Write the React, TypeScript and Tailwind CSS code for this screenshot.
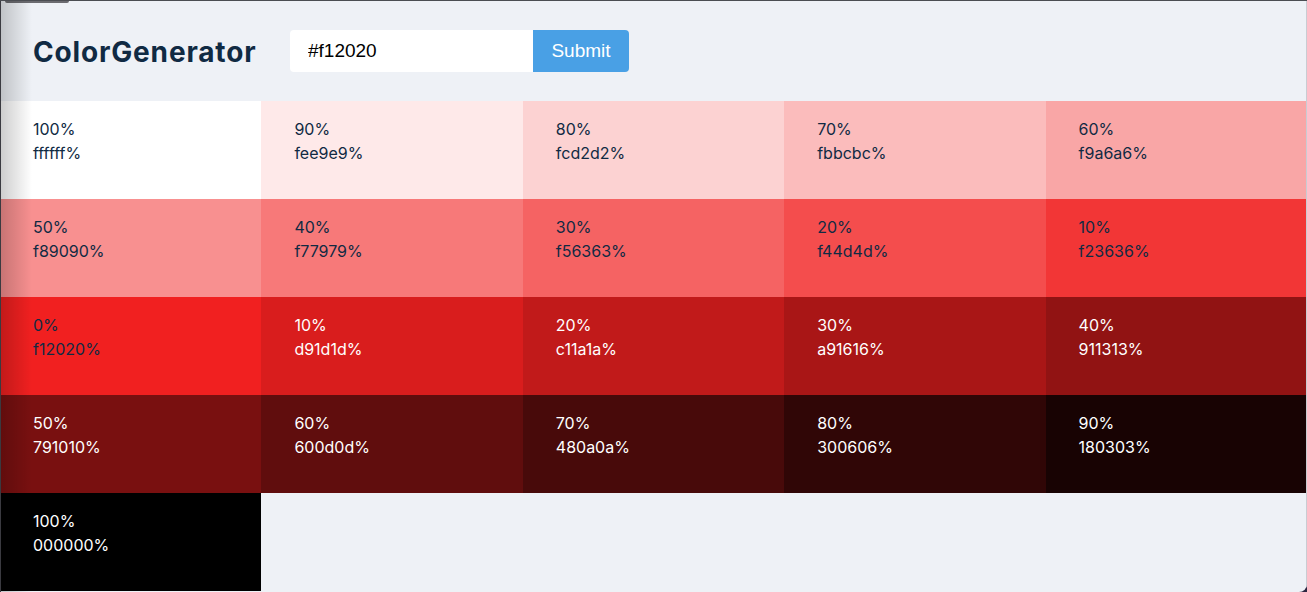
import React from "react";

type Swatch = { weight: number; hex: string; dark: boolean };

const tints = ["ffffff", "fee9e9", "fcd2d2", "fbbcbc", "f9a6a6", "f89090", "f77979", "f56363", "f44d4d", "f23636"];
const shades = ["d91d1d", "c11a1a", "a91616", "911313", "791010", "600d0d", "480a0a", "300606", "180303", "000000"];

const swatches: Swatch[] = [
  ...tints.map((hex, i) => ({ weight: 100 - i * 10, hex, dark: false })),
  { weight: 0, hex: "f12020", dark: false },
  ...shades.map((hex, i) => ({ weight: (i + 1) * 10, hex, dark: true })),
];

function SingleColor({ weight, hex, dark }: Swatch) {
  return (
    <div
      className={`h-[98px] pl-[33px] pr-8 pt-4 text-[16px] leading-6 ${dark ? "text-white" : "text-[#102a43]"}`}
      style={{ backgroundColor: `#${hex}` }}
    >
      <p>{weight}%</p>
      <p>{hex}%</p>
    </div>
  );
}

export default function App() {
  return (
    <div className="w-full h-[592px] bg-[#2b2540]">
      <div
        className="relative w-full h-full overflow-hidden bg-[#eef1f6] border-t border-[#4b4d52] rounded-br-lg"
        style={{ fontFamily: "Inter, 'Noto Sans', sans-serif" }}
      >
        <div className="absolute left-[5px] top-0 w-[64px] h-[2px] bg-[#6b6b70] rounded-b" />
        <section className="h-[100px] flex items-center pl-[33px]">
          <h3 className="text-[28px] font-bold tracking-[0.03em] text-[#102a43] w-[224px] mt-[1px] whitespace-nowrap">ColorGenerator</h3>
          <form className="flex ml-[33px]">
            <input
              defaultValue="#f12020"
              className="w-[243px] h-[42px] bg-white rounded-l pl-[18px] text-[19px] text-black outline-none"
              style={{ fontFamily: "'Liberation Sans', Arial, sans-serif" }}
            />
            <button
              className="w-[96px] h-[42px] bg-[#49a0e5] text-white text-[19px] rounded-r"
              style={{ fontFamily: "'Liberation Sans', Arial, sans-serif" }}
            >
              Submit
            </button>
          </form>
        </section>
        <section className="grid grid-cols-5">
          {swatches.map((s, i) => (
            <SingleColor key={i} {...s} />
          ))}
        </section>
        <div className="absolute left-0 top-0 bottom-0 w-[32px] bg-gradient-to-r from-black/20 to-transparent pointer-events-none" />
        <div className="absolute left-0 top-0 bottom-0 w-px bg-[#3a3a40]" />
        <div className="absolute right-0 top-0 bottom-0 w-px bg-[#c9ccd2]" />
      </div>
    </div>
  );
}
